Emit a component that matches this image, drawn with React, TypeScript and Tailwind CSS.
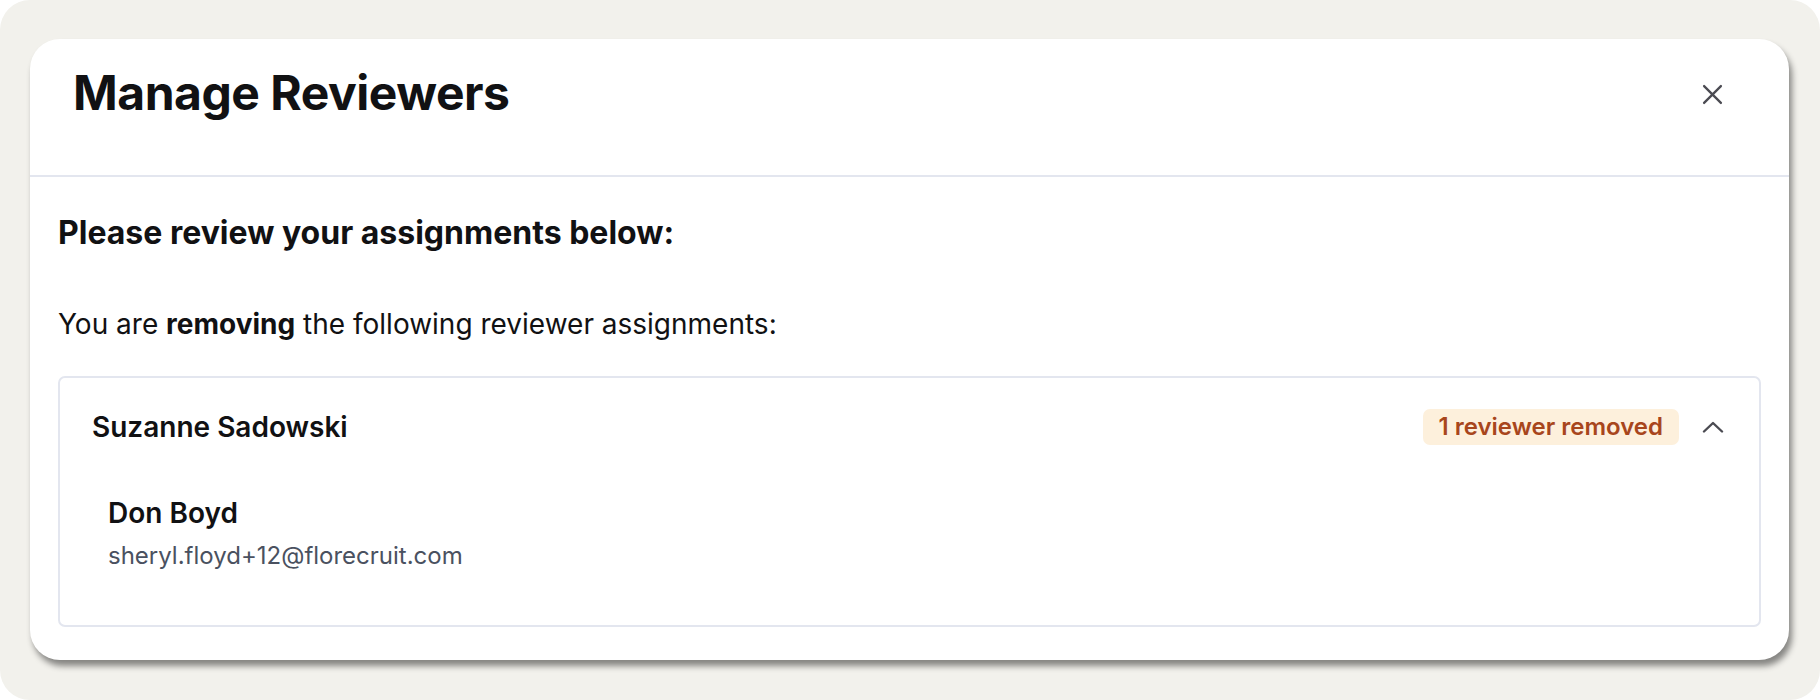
import React from "react";

/* ── Small drawn icons ─────────────────────────────────────── */
function CloseIcon() {
  return (
    <svg width="21" height="21" viewBox="0 0 20 20" fill="none" stroke="#4b4b52" strokeWidth="2.2" strokeLinecap="round">
      <path d="M2 2 L18 18 M18 2 L2 18" />
    </svg>
  );
}

function ChevronUp() {
  return (
    <svg width="22" height="12" viewBox="0 0 22 12" fill="none" stroke="#4b4b52" strokeWidth="2.4" strokeLinecap="round" strokeLinejoin="round">
      <path d="M2 10.5 L11 2 L20 10.5" />
    </svg>
  );
}

export default function App() {
  return (
    <div className="w-[1820px] h-[700px] bg-white" style={{ fontFamily: "Inter, 'Noto Sans', sans-serif" }}>
      <div className="w-full h-full bg-[#f2f1ec] rounded-[30px] pt-[39px] pl-[30px] pr-[31px]">
        {/* ── Modal card ── */}
        <div className="h-[621px] bg-white rounded-[30px] shadow-[3px_6px_6px_rgba(0,0,0,0.45)] flex flex-col">
          <div className="h-[138px] shrink-0 border-b-2 border-[#e3e6ef] flex items-center justify-between pl-[43px] pr-[66px]">
            <h1 className="text-[48px] font-bold text-[#111113] tracking-[-0.01em] leading-[56px] -mt-[29px]">Manage Reviewers</h1>
            <button className="-mt-[25px]">
              <CloseIcon />
            </button>
          </div>

          <div className="px-[28px] text-[#111113]">
            <h2 className="text-[32px] font-bold mt-[36px] leading-[40px]">Please review your assignments below:</h2>
            <p className="text-[28px] mt-[52px] leading-[38px]">
              You are <span className="font-bold">removing</span> the following reviewer assignments:
            </p>

            <div className="mt-[33px] h-[251px] border-2 border-[#e3e6ef] rounded-[7px]">
              <div className="flex items-center justify-between pl-[32px] pr-[35px] pt-[31px]">
                <span className="text-[28px] font-semibold leading-[36px]">Suzanne Sadowski</span>
                <div className="flex items-center gap-[23px]">
                  <span className="h-[36px] px-[16px] rounded-[7px] bg-[#fdf0dc] text-[#a8461c] text-[24px] font-semibold flex items-center">
                    1 reviewer removed
                  </span>
                  <ChevronUp />
                </div>
              </div>
              <div className="pl-[48px] mt-[51px]">
                <div className="text-[28px] font-semibold leading-[34px]">Don Boyd</div>
                <div className="text-[24px] text-[#4a5160] leading-[30px] mt-[11px]">sheryl.floyd+12@florecruit.com</div>
              </div>
            </div>
          </div>
        </div>
      </div>
    </div>
  );
}
